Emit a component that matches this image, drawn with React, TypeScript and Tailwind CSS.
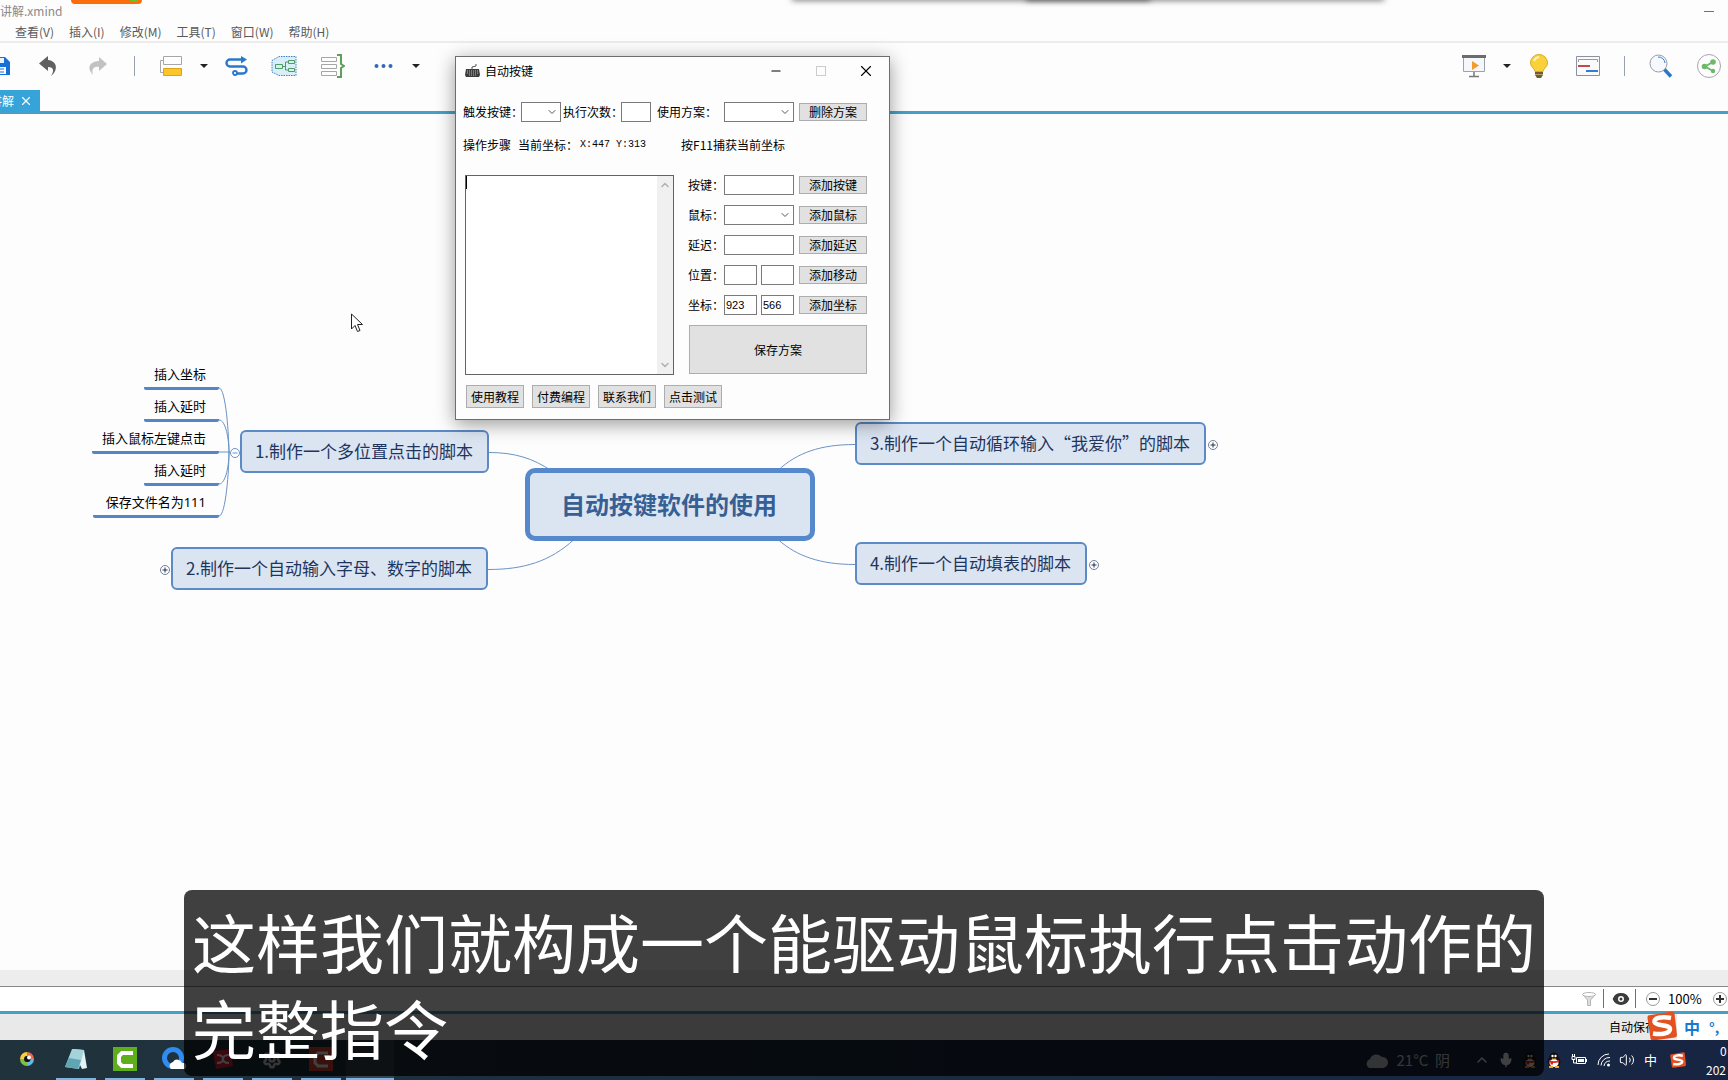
import type { ReactNode } from 'react';
import { ChevronDown, ChevronUp, Eye, Minus, Mic, Settings, Volume2, X } from 'lucide-react';

const menus = ['查看(V)', '插入(I)', '修改(M)', '工具(T)', '窗口(W)', '帮助(H)'];

const subTopics = [
  { text: '插入坐标', pos: 'left-[144px] top-[246px] w-[75px]' },
  { text: '插入延时', pos: 'left-[144px] top-[278px] w-[75px]' },
  { text: '插入鼠标左键点击', pos: 'left-[92px] top-[310px] w-[127px]' },
  { text: '插入延时', pos: 'left-[144px] top-[342px] w-[75px]' },
  { text: '保存文件名为111', pos: 'left-[93px] top-[374px] w-[126px]' },
];

const topics = [
  { text: '1.制作一个多位置点击的脚本', pos: 'left-[240px] top-[316px] w-[249px]' },
  { text: '2.制作一个自动输入字母、数字的脚本', pos: 'left-[171px] top-[433px] w-[317px]' },
  { text: '3.制作一个自动循环输入“我爱你”的脚本', pos: 'left-[855px] top-[308px] w-[351px]' },
  { text: '4.制作一个自动填表的脚本', pos: 'left-[855px] top-[428px] w-[232px]' },
];

const toggles = [
  { open: true, pos: 'left-[230px] top-[334px]' },
  { open: false, pos: 'left-[160px] top-[451px]' },
  { open: false, pos: 'left-[1208px] top-[326px]' },
  { open: false, pos: 'left-[1089px] top-[446px]' },
];

const Caret = () => (
  <svg className="h-1 w-2 shrink-0" viewBox="0 0 8 4">
    <path d="M0 0h8L4 4z" fill="#222" />
  </svg>
);

const ToolButton = ({ label, className, children }: { label: string; className: string; children: ReactNode }) => (
  <button type="button" aria-label={label} className={`flex h-6 shrink-0 items-center justify-center ${className}`}>
    {children}
  </button>
);

const Toolbar = () => (
  <div className="flex h-[47px] shrink-0 items-center justify-between overflow-hidden pb-[1px]">
    <div className="flex items-center">
      <ToolButton label="保存" className="w-[10px] overflow-hidden">
        <svg className="h-5 w-[10px]" viewBox="10 0 10 20">
          <path d="M0 1h15l5 5v13H0z" fill="#1670d8" />
          <path d="M3 2h11v5H3z" fill="#e9f2fd" />
          <path d="M3 11h13v7H3z" fill="#fff" />
          <path d="M5 13h9M5 16h9" stroke="#1670d8" />
        </svg>
      </ToolButton>
      <ToolButton label="撤销" className="ml-[28px] w-5">
        <svg className="h-5 w-5" viewBox="0 0 20 20">
          <path d="M10 0L1 7.500 10 15v-4c5 0 7 3 3 9 7-5 7-15-3-16z" fill="#606060" />
        </svg>
      </ToolButton>
      <ToolButton label="重做" className="ml-[30px] w-5">
        <svg className="h-5 w-5" viewBox="0 0 20 20">
          <path d="M11 1l8 7-8 7v-4c-5-1-8 2-6 8C-1 13 0 6 11 5z" fill="#c2c2c2" />
        </svg>
      </ToolButton>
      <span className="ml-[26px] h-5 w-px bg-gray-400" />
      <ToolButton label="主题" className="ml-[25px] w-[22px]">
        <svg className="h-5 w-[22px]" viewBox="0 0 22 20">
          <path d="M3.500.5h18v8h-18zM3 4.500H.5v12H3" fill="none" stroke="#a6a6a6" />
          <path d="M3.500 12.500h18v7h-18z" fill="#fcc626" stroke="#d9a520" />
        </svg>
      </ToolButton>
      <button type="button" aria-label="主题选项" className="ml-[18px]"><Caret /></button>
      <ToolButton label="联系" className="ml-[17px] w-6">
        <svg className="h-5 w-6" viewBox="0 0 24 20" fill="none" stroke="#2a78cc" strokeWidth="2.400">
          <path d="M17 3.500H5a3.500 3.500 0 0 0 0 7h13a3.500 3.500 0 0 1 0 7h-6" />
          <circle cx="10" cy="17" r="2" strokeWidth="1.800" />
          <path d="M16 0l6 3.500-6 4z" fill="#2a78cc" stroke="none" />
        </svg>
      </ToolButton>
      <ToolButton label="外框" className="ml-[22px] w-[26px]">
        <svg className="h-5 w-[26px]" viewBox="0 0 26 20">
          <path d="M1 4.500L8 .5h17v19H8L1 16z" fill="#d8effa" stroke="#3f7fc0" strokeDasharray="1.500 1" />
          <path d="M4.500 8.500h7v4h-7zM17.500 4.500h6v3h-6zM17.500 12.500h6v3h-6zM11.500 10.500h3M17 6h-2.500v8H17" fill="none" stroke="#4e9b63" />
        </svg>
      </ToolButton>
      <ToolButton label="概要" className="ml-[24px] w-6">
        <svg className="h-6 w-6" viewBox="0 0 24 24">
          <path d="M.5 3.500h15v4H.5zM.5 10.500h15v4H.5zM.5 17.500h15v4H.5z" fill="none" stroke="#a6a6a6" />
          <path d="M16 1h4v9l3 2-3 2v9h-4" fill="none" stroke="#5ea05a" strokeWidth="2" />
        </svg>
      </ToolButton>
      <ToolButton label="更多" className="ml-[29px] w-5">
        <svg className="h-1 w-5" viewBox="0 0 20 4" fill="#3568b8">
          <circle cx="2.500" cy="2" r="2" />
          <circle cx="9.500" cy="2" r="2" />
          <circle cx="16.500" cy="2" r="2" />
        </svg>
      </ToolButton>
      <button type="button" aria-label="更多选项" className="ml-[18px]"><Caret /></button>
    </div>

    <div className="flex items-center pr-[7px]">
      <ToolButton label="演示" className="w-6">
        <svg className="h-6 w-6" viewBox="0 0 24 24">
          <path d="M1.500 3.500h21v14h-21z" fill="#f5f7fb" stroke="#9aa3ad" />
          <path d="M0 1h24v3H0z" fill="#6c6c6c" />
          <path d="M10 7l7 4.500-7 4.500z" fill="#f59a2d" />
          <path d="M12 18v5M7 22.500h10" stroke="#777" strokeWidth="1.500" />
        </svg>
      </ToolButton>
      <button type="button" aria-label="演示选项" className="ml-[17px]"><Caret /></button>
      <ToolButton label="头脑风暴" className="ml-[18px] w-5">
        <svg className="h-6 w-5" viewBox="0 0 20 24">
          <path d="M10 .5a8.500 8.500 0 0 0-8.500 8.500c0 4 4 5 4.500 8.500h8c.5-3.500 4.500-4.500 4.500-8.500A8.500 8.500 0 0 0 10 .5z" fill="#fbd13a" stroke="#d8a92c" />
          <path d="M5 7a6 6 0 0 1 5-4" fill="none" stroke="#fff3b5" strokeWidth="2" />
          <path d="M6 18h8v3l-2 3H8l-2-3z" fill="#6b5d3a" />
          <path d="M6 20.500h8" stroke="#b9a46a" />
        </svg>
      </ToolButton>
      <ToolButton label="甘特图" className="ml-[27px] w-6">
        <svg className="h-5 w-6" viewBox="0 0 24 20">
          <path d="M.5.5h23v19H.5z" fill="#fafafa" stroke="#8c90a0" />
          <path d="M2.500 6V3.500h19V6" fill="none" stroke="#999" />
          <path d="M2 10h12" stroke="#c34a48" strokeWidth="2" />
          <path d="M10 15h12" stroke="#2f7fd0" strokeWidth="2" />
        </svg>
      </ToolButton>
      <span className="ml-[24px] h-5 w-px bg-gray-400" />
      <ToolButton label="搜索" className="ml-[24px] w-6">
        <svg className="h-6 w-6" viewBox="0 0 24 24">
          <circle cx="9.500" cy="9.500" r="8.500" fill="#f5f8fc" stroke="#9a9aa5" />
          <path d="M9 3a6.500 6.500 0 0 1 7 6" fill="none" stroke="#3b7ec6" />
          <path d="M15.500 15.500l6.500 7" stroke="#2b78c8" strokeWidth="3.500" />
        </svg>
      </ToolButton>
      <ToolButton label="分享" className="ml-[24px] w-6">
        <svg className="h-6 w-6" viewBox="0 0 24 24">
          <circle cx="12" cy="12" r="11.500" fill="#fdfdfd" stroke="#aaa4ae" />
          <path d="M16 8l-8 4.500 8 4.500" fill="none" stroke="#6cb96a" strokeWidth="2" />
          <circle cx="16" cy="8" r="2.800" fill="#6cb96a" />
          <circle cx="7.500" cy="12.500" r="2.800" fill="#6cb96a" />
          <circle cx="16" cy="17" r="2.200" fill="#6cb96a" />
        </svg>
      </ToolButton>
    </div>
  </div>
);

const field = "h-5 border border-[#7a7a7a] bg-white px-px font-['Liberation_Sans',sans-serif] text-[11px] text-black outline-none";
const button = 'flex items-center justify-center border border-[#adadad] bg-[#e1e1e1] text-xs text-black';

const SelectBox = ({ id, className }: { id: string; className: string }) => (
  <div className={`relative ${className}`}>
    <select id={id} className={`${field} block w-full appearance-none`} />
    <ChevronDown className="pointer-events-none absolute right-[3px] top-1 h-3 w-3 text-[#555]" strokeWidth={2} />
  </div>
);

const stepRows = [
  { id: 'key', label: '按键：', action: '添加按键', kind: 'text', values: [''] },
  { id: 'mouse', label: '鼠标：', action: '添加鼠标', kind: 'select', values: [] },
  { id: 'delay', label: '延迟：', action: '添加延迟', kind: 'text', values: [''] },
  { id: 'move', label: '位置：', action: '添加移动', kind: 'text', values: ['', ''] },
  { id: 'coord', label: '坐标：', action: '添加坐标', kind: 'text', values: ['923', '566'] },
];

const MacroWindow = () => (
  <section
    aria-label="自动按键"
    className="absolute left-[455px] top-[56px] w-[435px] border border-[#6e6e6e] bg-[#fdfdfd] pb-[11px] text-xs text-black shadow-[0_4px_18px_rgba(0,0,0,0.4)]"
  >
    <header className="flex h-7 items-center pl-[9px]">
      <svg className="h-[14px] w-[15px]" viewBox="0 0 15 14">
        <path d="M7 5V3l4-1V0" fill="none" stroke="#555" />
        <path d="M1 5h13l1 6-1 2H1l-1-2z" fill="#3c3c3c" />
        <path d="M2 7h11M2 9h11M4 11h7" stroke="#bbb" strokeDasharray="1 1" />
      </svg>
      <h1 className="ml-[5px] flex-1">自动按键</h1>
      <button type="button" aria-label="最小化" className="flex w-[45px] justify-center"><Minus className="h-[14px] w-[14px]" strokeWidth={2} /></button>
      <button type="button" aria-label="最大化" disabled className="flex w-[45px] justify-center"><span className="h-[10px] w-[10px] border border-[#ccc]" /></button>
      <button type="button" aria-label="关闭" className="flex w-[46px] justify-center"><X className="h-[18px] w-[18px]" strokeWidth={1.5} /></button>
    </header>

    <div className="mt-[17px] flex items-center pl-[7px]">
      <label htmlFor="trigger" className="w-[58px] whitespace-nowrap">触发按键：</label>
      <SelectBox id="trigger" className="w-10" />
      <label htmlFor="count" className="ml-[2px] w-[58px] whitespace-nowrap">执行次数：</label>
      <input id="count" className={`${field} w-[30px]`} />
      <label htmlFor="plan" className="ml-[6px] w-[67px] whitespace-nowrap">使用方案：</label>
      <SelectBox id="plan" className="w-[70px]" />
      <button type="button" className={`${button} ml-[5px] h-[18px] w-[68px]`}>删除方案</button>
    </div>

    <div className="mt-[13px] flex h-5 items-center pl-[7px]">
      <span>操作步骤</span>
      <span className="ml-[7px] w-[62px] whitespace-nowrap">当前坐标：</span>
      <span className="w-[101px] whitespace-pre font-['Liberation_Mono','Noto_Sans_CJK_SC',monospace] text-[10px]">X:447 Y:313</span>
      <span>按F11捕获当前坐标</span>
    </div>

    <div className="mt-5 flex pl-[9px]">
      <div className="relative flex h-[200px] w-[209px] border border-[#646464] bg-white">
        <textarea aria-label="操作步骤" className="min-w-0 flex-1 resize-none px-px text-xs leading-4 outline-none" />
        <span className="absolute left-0 top-0 h-[13px] w-px bg-black" />
        <div className="flex w-4 flex-col items-center justify-between bg-[#f0f0f0] py-[3px] text-[#b0b0b0]">
          <ChevronUp className="h-3 w-3" strokeWidth={3} />
          <ChevronDown className="h-3 w-3" strokeWidth={3} />
        </div>
      </div>
      <div className="ml-[14px] flex flex-col gap-[10px]">
        {stepRows.map((row) => (
          <div key={row.id} className="flex items-center">
            <label htmlFor={row.id} className="w-9 whitespace-nowrap">{row.label}</label>
            {row.kind === 'select' ? (
              <SelectBox id={row.id} className="w-[70px]" />
            ) : (
              <div className="flex w-[70px] gap-1">
                {row.values.map((value, i) => (
                  <input key={i} id={i === 0 ? row.id : undefined} aria-label={row.label} defaultValue={value} className={`${field} w-full min-w-0`} />
                ))}
              </div>
            )}
            <button type="button" className={`${button} ml-[5px] h-[18px] w-[68px]`}>{row.action}</button>
          </div>
        ))}
        <button type="button" className={`${button} h-[49px] w-[178px] self-end`}>保存方案</button>
      </div>
    </div>

    <div className="mt-[10px] flex gap-2 pl-[10px]">
      {['使用教程', '付费编程', '联系我们', '点击测试'].map((text) => (
        <button key={text} type="button" className={`${button} h-[23px] w-[58px]`}>{text}</button>
      ))}
    </div>
  </section>
);

const MindMap = () => (
  <main className="relative flex-1 overflow-hidden">
    <svg className="absolute left-0 top-0 h-[500px] w-[900px]" viewBox="0 0 900 500" fill="none" stroke="#6b93c6">
      <path d="M219 274c7 0 10 50 10 65M219 306c7 0 10 20 10 33M219 338h11M219 370c7 0 10-20 10-31M219 402c7 0 10-48 10-63" />
      <path d="M489 338.500c26 0 44 6 62 18M488 455.500c36 0 62-8 86-30M855 330.500c-34 0-58 8-77 26M855 450.500c-34 0-58-8-77-25" />
    </svg>
    {subTopics.map((topic, i) => (
      <div key={i} className={`absolute h-[30px] rounded-b-xs border-b-[3px] border-[#5585c4] pr-[13px] text-right font-['Noto_Sans','Noto_Sans_CJK_SC',sans-serif] text-[13px] leading-7 whitespace-nowrap text-black ${topic.pos}`}>
        {topic.text}
      </div>
    ))}
    {topics.map((topic) => (
      <div key={topic.text} className={`absolute flex h-[43px] items-center justify-center rounded-md border-2 border-[#5b8ac6] bg-[#dbe5f2] pr-px pb-[2px] text-[17px] whitespace-nowrap text-[#1f355e] ${topic.pos}`}>
        {topic.text}
      </div>
    ))}
    {toggles.map((toggle) => (
      <button key={toggle.pos} type="button" aria-label={toggle.open ? '折叠' : '展开'} className={`absolute ${toggle.pos}`}>
        <svg className="h-[10px] w-[10px]" viewBox="0 0 10 10" fill="none">
          <circle cx="5" cy="5" r="4.500" fill="#fff" stroke={toggle.open ? '#6b93c6' : '#6f7f96'} />
          <path d={toggle.open ? 'M2.500 5h5' : 'M2.500 5h5M5 2.500v5'} stroke={toggle.open ? '#6b93c6' : '#1f3050'} />
        </svg>
      </button>
    ))}
    <div className="absolute left-[525px] top-[354px] flex h-[73px] w-[290px] items-center justify-center rounded-[10px] border-[5px] border-[#5589cb] bg-[#dbe5f1] pr-[2px] pb-[2px] text-2xl font-bold text-[#365f94]">
      自动按键软件的使用
    </div>
  </main>
);

const SogouLogo = ({ className }: { className: string }) => (
  <svg className={className} viewBox="0 0 30 30">
    <path d="M1 4.500L25 .5q2 0 2.500 2L30 24q0 2-2 2.500L6 29.500q-2 0-2.500-2L.5 7q0-2 .5-2.500z" fill="#e5501f" />
    <path d="M24 7C14 5 7 7 7.500 11c1 4.500 15 2 15.500 7 0 4.500-9 6-17 4.500" fill="none" stroke="#fff" strokeWidth="4.500" />
  </svg>
);

const StatusBar = () => (
  <footer className="shrink-0">
    <div className="h-4 bg-[#ededed]" />
    <div className="flex h-[25px] items-center justify-end border-t border-[#8a8a8a] bg-white pb-px text-[13px] text-black">
      <button type="button" aria-label="筛选">
        <svg className="h-[14px] w-[14px]" viewBox="0 0 14 14">
          <path d="M.5 2.500L5.500 8v5.500h3V8l5-5.500z" fill="#ddd" stroke="#b5b5b5" />
          <ellipse cx="7" cy="2.500" rx="6.500" ry="2" fill="#fff" stroke="#b5b5b5" />
        </svg>
      </button>
      <span className="ml-[7px] h-[19px] w-px bg-gray-500" />
      <button type="button" aria-label="视图" className="ml-2">
        <Eye className="h-[18px] w-[18px] fill-[#3c3c3c] text-[#3c3c3c] [&>circle]:fill-[#3c3c3c] [&>circle]:stroke-white" />
      </button>
      <span className="ml-[5px] h-[19px] w-px bg-gray-500" />
      <button type="button" aria-label="缩小" className="ml-[10px]">
        <svg className="h-[14px] w-[14px]" viewBox="0 0 14 14">
          <circle cx="7" cy="7" r="6.500" fill="#fff" stroke="#999" />
          <path d="M3 7h8" stroke="#333" strokeWidth="2" />
        </svg>
      </button>
      <span className="w-[53px] pl-2">100%</span>
      <button type="button" aria-label="放大" className="mr-[1px]">
        <svg className="h-[14px] w-[14px]" viewBox="0 0 14 14">
          <circle cx="7" cy="7" r="6.500" fill="#fff" stroke="#999" />
          <path d="M3 7h8M7 3v8" stroke="#333" strokeWidth="2" />
        </svg>
      </button>
    </div>
    <div className="flex h-[29px] items-stretch justify-end border-t-[3px] border-[#45a0c6] bg-[#e9e9e9]">
      <span className="text-xs leading-[26px] whitespace-nowrap text-black">自动保存</span>
      <SogouLogo className="-mt-[3px] -ml-[10px] h-[30px] w-[30px] shrink-0" />
      <div className="flex w-[51px] items-center bg-white pl-[7px] text-base font-bold text-[#1878cf]">
        <span>中</span>
        <span className="ml-[9px] text-sm">°,</span>
      </div>
    </div>
  </footer>
);

const Penguin = () => (
  <svg className="h-4 w-4" viewBox="0 0 16 16">
    <ellipse cx="8" cy="9.500" rx="6.500" ry="5.500" fill="#111" />
    <circle cx="8" cy="5" r="4.500" fill="#111" />
    <ellipse cx="8" cy="11" rx="4.500" ry="4" fill="#fff" />
    <path d="M3 8q5 2.500 10 0v2q-5 2-10 0z" fill="#e02020" />
    <path d="M4.500 9h2.500v3.500H4.500z" fill="#e02020" />
    <circle cx="6.500" cy="4" r="1.200" fill="#fff" />
    <circle cx="9.500" cy="4" r="1.200" fill="#fff" />
    <path d="M5.500 6.500h5L8 8zM3 14h4v2H3zM9 14h4v2H9z" fill="#f5a623" />
  </svg>
);

const Taskbar = () => (
  <nav aria-label="任务栏" className="flex h-10 shrink-0 items-stretch justify-between overflow-hidden bg-linear-to-r from-[#20333c] to-[#172543] text-white">
    <div className="flex items-stretch">
      <TaskItem label="浏览器" running={false}>
        <svg className="h-[14px] w-[14px]" viewBox="0 0 14 14" fill="none" strokeWidth="4">
          <path d="M7 2a5 5 0 0 1 5 5" stroke="#ef6a4a" />
          <path d="M12 7a5 5 0 0 1-5 5" stroke="#65b7e8" />
          <path d="M7 12a5 5 0 0 1-5-5" stroke="#7bc143" />
          <path d="M2 7a5 5 0 0 1 5-5" stroke="#f7cf46" />
          <circle cx="7.500" cy="7" r="3" fill="#111" stroke="none" />
          <circle cx="9" cy="5.500" r="2" fill="#fff" stroke="none" />
        </svg>
      </TaskItem>
      <TaskItem label="记事本" running>
        <svg className="h-[22px] w-[23px]" viewBox="0 0 23 22">
          <path d="M7 1l12 1 3 18-5 1z" fill="#e3f2f4" />
          <path d="M7 1l12 1-5 19L0 19z" fill="#a5d3dc" />
          <path d="M4 10l12 2-3 9L0 19z" fill="#5fa6b5" />
        </svg>
      </TaskItem>
      <TaskItem label="录屏" running>
        <svg className="h-6 w-6" viewBox="0 0 24 24">
          <path d="M0 0h24v24H0z" fill="#5fae1c" />
          <path d="M20 6H9L6 9v7l3 3h11" fill="none" stroke="#fff" strokeWidth="4" />
        </svg>
      </TaskItem>
      <TaskItem label="网盘" running>
        <svg className="h-6 w-6" viewBox="0 0 24 24">
          <circle cx="11" cy="11" r="8.500" fill="none" stroke="#2f8cf0" strokeWidth="5" />
          <path d="M9 22a4 4 0 0 1 2-7 5 5 0 0 1 9 1 3 3 0 0 1 2 6z" fill="#fff" />
        </svg>
      </TaskItem>
      <TaskItem label="思维导图" running>
        <svg className="h-5 w-5" viewBox="0 0 20 20">
          <path d="M0 2L17 0l3 17-17 3z" fill="#e8213c" />
          <path d="M4 6q6 0 6 4t6 4M16 6q-6 0-6 4t-6 4" fill="none" stroke="#fff" strokeWidth="2" />
        </svg>
      </TaskItem>
      <TaskItem label="设置" running>
        <Settings className="h-5 w-5 text-gray-300" strokeWidth={3} />
      </TaskItem>
      <TaskItem label="剪辑" running>
        <svg className="h-6 w-6" viewBox="0 0 24 24">
          <path d="M0 0h24v24H0z" fill="#e04634" />
          <path d="M19 6H9L6 9v7l3 3h10" fill="none" stroke="#fff" strokeWidth="3" />
        </svg>
      </TaskItem>
      <div className="-ml-1 w-12 border-b-2 border-[#7db4e6] bg-white/10" />
    </div>

    <div className="flex items-center">
      <svg className="h-4 w-6" viewBox="0 0 24 16">
        <path d="M5 16a5 5 0 0 1 1-9 7 7 0 0 1 12-2 5.500 5.500 0 0 1 1 11z" fill="#c9ced6" />
      </svg>
      <span className="ml-2 text-[15px] text-gray-300">21°C&nbsp; 阴</span>
      <ChevronUp className="ml-[24px] h-4 w-4" />
      <Mic className="ml-[8px] h-4 w-4 fill-current" />
      <span className="ml-[8px]"><Penguin /></span>
      <span className="ml-[8px]"><Penguin /></span>
      <svg className="ml-[9px] h-3 w-4" viewBox="0 0 16 12" fill="none" stroke="#fff">
        <path d="M5.500 3.500h9v6h-9zM1 2.500h3v3H1zM2.500 6v3h3M1.500 0v2M3.500 0v2M15.500 5v3" />
        <path d="M7 5h6v3H7z" fill="#fff" stroke="none" />
      </svg>
      <svg className="ml-[10px] h-[14px] w-[14px]" viewBox="0 0 14 14" fill="none" stroke="#fff">
        <path d="M1 12A11 11 0 0 1 12 1M4 12.500A8.500 8.500 0 0 1 13 4.500M7 13a6 6 0 0 1 6-5" />
        <circle cx="11.500" cy="12" r="1.500" fill="#fff" stroke="none" />
      </svg>
      <Volume2 className="ml-[8px] h-4 w-4" strokeWidth={1.5} />
      <span className="ml-[9px] text-[13px]">中</span>
      <SogouLogo className="ml-[13px] h-4 w-4" />
      <div className="ml-[10px] flex w-[32px] flex-col overflow-hidden text-xs leading-[19px]">
        <span className="pl-[24px]">0</span>
        <span className="pl-[10px]">202</span>
      </div>
    </div>
  </nav>
);

function TaskItem({ label, running, children }: { label: string; running: boolean; children: ReactNode }) {
  return (
    <button
      type="button"
      aria-label={label}
      className={`mr-[9px] flex w-10 items-center justify-center border-b-2 ${running ? 'border-[#7db4e6]' : 'ml-[7px] border-transparent'}`}
    >
      {children}
    </button>
  );
}

export default function App() {
  return (
    <div className="relative flex h-screen flex-col overflow-hidden bg-[#fdfdfd] font-['Noto_Sans_CJK_SC','Noto_Sans',sans-serif]">
      <header className="shrink-0">
        <div className="flex h-[22px] items-center justify-between pr-[14px] text-xs text-[#8a8a8a]">
          <span>讲解.xmind</span>
          <button type="button" aria-label="最小化" className="h-px w-[10px] bg-gray-500" />
        </div>
        <div className="flex h-[21px] items-center gap-[15px] overflow-hidden border-b-2 border-[#ececec] pl-[15px] text-xs text-[#5a5a5a]">
          {menus.map((menu) => (
            <button key={menu} type="button">{menu}</button>
          ))}
        </div>
        <Toolbar />
        <div className="flex h-6 items-stretch border-b-[3px] border-[#45a0c6]">
          <div className="flex w-10 items-center bg-[#36a3d9] text-xs text-white">
            <span className="flex w-[14px] shrink-0 justify-end overflow-hidden whitespace-nowrap">讲解</span>
            <button type="button" aria-label="关闭标签" className="ml-[5px]"><X className="h-[14px] w-[14px]" strokeWidth={2} /></button>
          </div>
        </div>
      </header>

      <MindMap />
      <StatusBar />
      <Taskbar />

      <div className="absolute left-[71px] top-0 h-1 w-[71px] rounded-b bg-[#fb6d0c] shadow-md">
        <span className="absolute right-1 top-0 h-[2px] w-2 rounded-b-full bg-[#6bbf2c]" />
      </div>
      <div className="absolute left-[792px] -top-1 h-1 w-[592px] shadow-[0_0_6px_rgba(0,0,0,0.7)]" />
      <div className="absolute left-[1026px] -top-1 h-1 w-[124px] shadow-[0_0_6px_rgba(0,0,0,0.7)]" />

      <MacroWindow />

      <svg className="absolute left-[351px] top-[313px] h-5 w-3" viewBox="0 0 12 20">
        <path d="M.5 1v15l3.500-3.500 2.500 6 2.500-1-2.500-6h5z" fill="#fff" stroke="#222" />
      </svg>

      <p className="absolute inset-x-[184px] bottom-1 rounded-lg bg-black/75 pt-[7px] pb-[7px] pl-2 text-[64px] leading-[86px] text-white">
        这样我们就构成一个能驱动鼠标执行点击动作的完整指令
      </p>
    </div>
  );
}
